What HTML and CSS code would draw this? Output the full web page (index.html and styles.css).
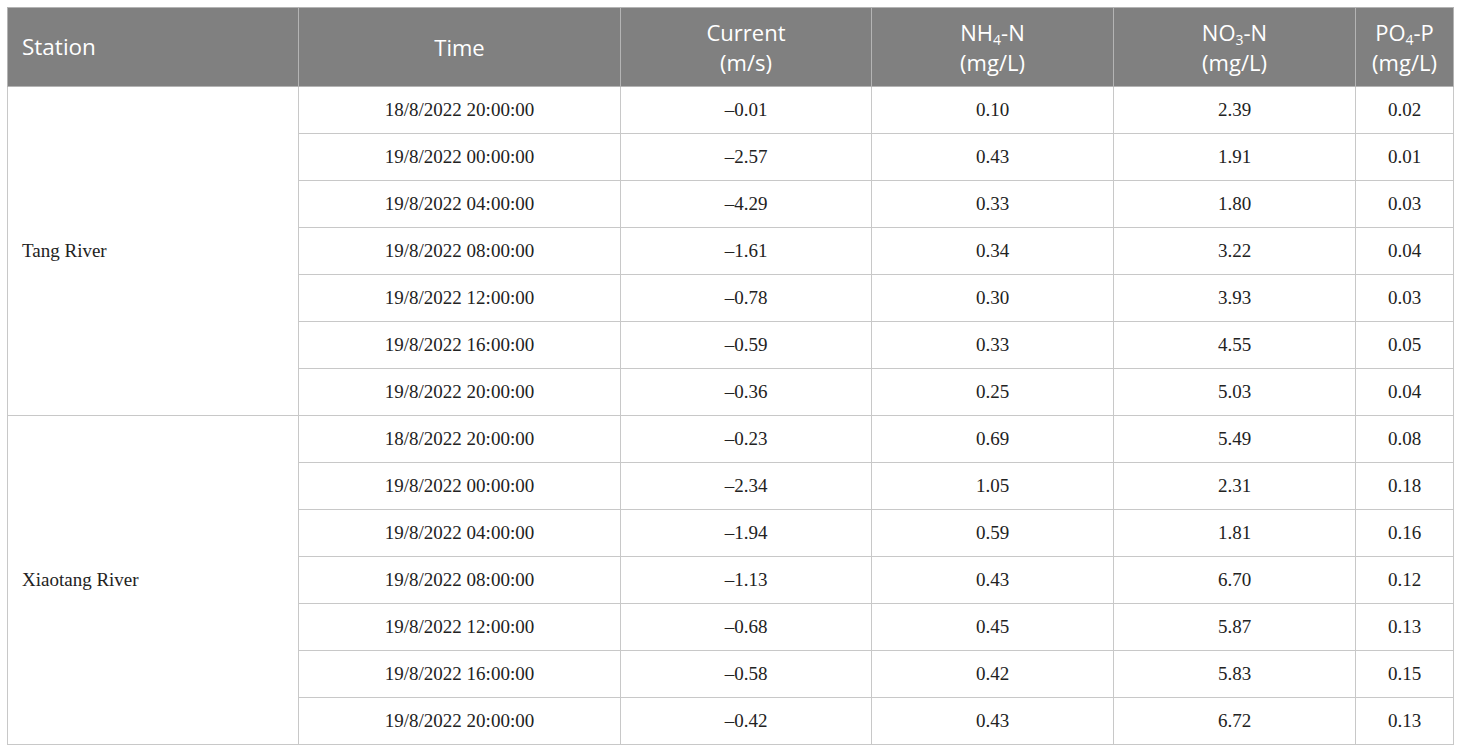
FILE: index.html
```html
<!DOCTYPE html>
<html>
<head>
<meta charset="utf-8">
<link rel="stylesheet" href="styles.css">
</head>
<body>
<table class="data">
  <colgroup>
    <col class="c1"><col class="c2"><col class="c3"><col class="c4"><col class="c5"><col class="c6">
  </colgroup>
  <thead>
    <tr>
      <th class="left">Station</th>
      <th>Time</th>
      <th>Current<br>(m/s)</th>
      <th>NH<sub>4</sub>-N<br>(mg/L)</th>
      <th>NO<sub>3</sub>-N<br>(mg/L)</th>
      <th>PO<sub>4</sub>-P<br>(mg/L)</th>
    </tr>
  </thead>
  <tbody>
    <tr><td class="station" rowspan="7">Tang River</td><td>18/8/2022 20:00:00</td><td>–0.01</td><td>0.10</td><td>2.39</td><td>0.02</td></tr>
    <tr><td>19/8/2022 00:00:00</td><td>–2.57</td><td>0.43</td><td>1.91</td><td>0.01</td></tr>
    <tr><td>19/8/2022 04:00:00</td><td>–4.29</td><td>0.33</td><td>1.80</td><td>0.03</td></tr>
    <tr><td>19/8/2022 08:00:00</td><td>–1.61</td><td>0.34</td><td>3.22</td><td>0.04</td></tr>
    <tr><td>19/8/2022 12:00:00</td><td>–0.78</td><td>0.30</td><td>3.93</td><td>0.03</td></tr>
    <tr><td>19/8/2022 16:00:00</td><td>–0.59</td><td>0.33</td><td>4.55</td><td>0.05</td></tr>
    <tr><td>19/8/2022 20:00:00</td><td>–0.36</td><td>0.25</td><td>5.03</td><td>0.04</td></tr>
    <tr><td class="station" rowspan="7">Xiaotang River</td><td>18/8/2022 20:00:00</td><td>–0.23</td><td>0.69</td><td>5.49</td><td>0.08</td></tr>
    <tr><td>19/8/2022 00:00:00</td><td>–2.34</td><td>1.05</td><td>2.31</td><td>0.18</td></tr>
    <tr><td>19/8/2022 04:00:00</td><td>–1.94</td><td>0.59</td><td>1.81</td><td>0.16</td></tr>
    <tr><td>19/8/2022 08:00:00</td><td>–1.13</td><td>0.43</td><td>6.70</td><td>0.12</td></tr>
    <tr><td>19/8/2022 12:00:00</td><td>–0.68</td><td>0.45</td><td>5.87</td><td>0.13</td></tr>
    <tr><td>19/8/2022 16:00:00</td><td>–0.58</td><td>0.42</td><td>5.83</td><td>0.15</td></tr>
    <tr><td>19/8/2022 20:00:00</td><td>–0.42</td><td>0.43</td><td>6.72</td><td>0.13</td></tr>
  </tbody>
</table>
</body>
</html>
```
FILE: styles.css
```css
html, body {
  margin: 0;
  padding: 0;
  background: #ffffff;
}
body {
  padding: 7px 7px 0 7px;
}
.data {
  border-collapse: collapse;
  table-layout: fixed;
  width: 1446px;
}
.c1 { width: 291px; }
.c2 { width: 322px; }
.c3 { width: 251px; }
.c4 { width: 242px; }
.c5 { width: 242px; }
.c6 { width: 98px; }
.data th {
  background: #808080;
  color: #ffffff;
  font-family: "Open Sans", "Noto Sans", sans-serif;
  font-weight: 400;
  font-size: 22px;
  line-height: 30px;
  height: 79px;
  padding: 0 4px;
  text-align: center;
  vertical-align: middle;
  border: 1px solid #b4b4b4;
  box-sizing: border-box;
}
.data th.left {
  text-align: left;
  padding-left: 14px;
  font-size: 22.5px;
}
.data th sub {
  font-size: 14px;
  line-height: 0;
  vertical-align: -4px;
}
.data td {
  font-family: "Liberation Serif", "Times New Roman", serif;
  font-size: 19px;
  color: #222222;
  text-align: center;
  vertical-align: middle;
  height: 47px;
  padding: 0 4px;
  border: 1px solid #c8c8c8;
  box-sizing: border-box;
}
.data td.station {
  text-align: left;
  padding-left: 14px;
}
```
